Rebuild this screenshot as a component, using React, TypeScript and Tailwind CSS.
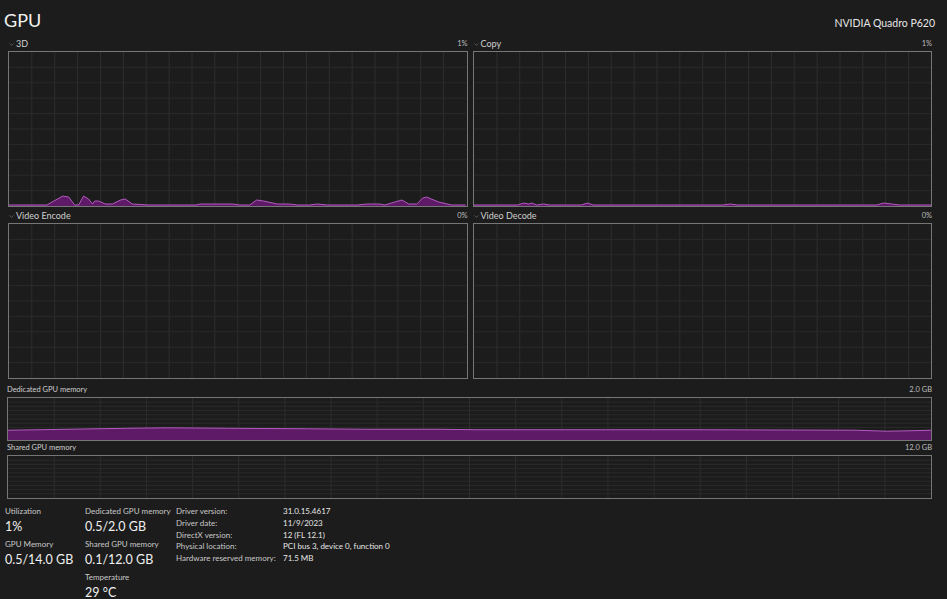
import { ChevronDown } from 'lucide-react'

// ─── Chart data ───────────────────────────────────────────────────────────────

// [x, y] in chart pixels (460 x 155), y measured from top
const pts3d: [number, number][] = [
  [0, 154], [38, 154], [54, 145], [60, 146], [66, 154], [70, 154], [75, 145], [80, 148], [84, 153],
  [86, 150], [90, 150], [97, 153], [104, 153], [112, 149], [117, 148], [124, 153], [140, 154],
  [188, 154], [192, 153], [225, 153], [232, 154], [242, 154], [249, 149], [256, 150], [270, 153],
  [282, 153], [290, 154], [302, 154], [310, 153], [320, 154], [350, 154], [360, 153], [372, 153],
  [378, 154], [388, 151], [395, 149], [402, 153], [410, 153], [416, 147], [420, 146], [432, 151],
  [445, 154], [459, 154],
]

const ptsCopy: [number, number][] = [
  [0, 154], [44, 154], [50, 152], [55, 153], [58, 152], [63, 154], [70, 153], [76, 154], [108, 154],
  [114, 152], [120, 154], [250, 154], [258, 153], [265, 154], [405, 154], [412, 152], [420, 153], [428, 154], [460, 154],
]

const ptsDedicated: [number, number][] = [
  [0, 33], [60, 32], [120, 31], [160, 30.5], [220, 31], [300, 31.5], [360, 32], [430, 32],
  [470, 32.5], [600, 32.5], [700, 32.5], [850, 33], [880, 34], [905, 33.5], [925, 33],
]

function areaPath(pts: [number, number][], h: number) {
  const line = pts.map(([x, y], i) => `${i === 0 ? 'M' : 'L'}${x} ${y}`).join(' ')
  const last = pts[pts.length - 1]
  return {
    line,
    area: `${line} L${last[0]} ${h} L${pts[0][0]} ${h} Z`,
  }
}

// ─── Components ───────────────────────────────────────────────────────────────

function Chart({
  w,
  h,
  cols,
  rows,
  pts,
  className,
}: {
  w: number
  h: number
  cols: number
  rows: number
  pts?: [number, number][]
  className?: string
}) {
  const path = pts ? areaPath(pts, h) : null
  return (
    <div className={`border border-[#767676] bg-[#1c1c1c] ${className ?? ''}`}>
      <svg width="100%" height="100%" viewBox={`0 0 ${w} ${h}`} preserveAspectRatio="none" className="block">
        {Array.from({ length: cols - 1 }, (_, i) => (
          <line
            key={`c${i}`}
            x1={((i + 1) * w) / cols}
            x2={((i + 1) * w) / cols}
            y1={0}
            y2={h}
            stroke="#2e2e2e"
            strokeWidth={1}
            vectorEffect="non-scaling-stroke"
          />
        ))}
        {Array.from({ length: rows - 1 }, (_, i) => (
          <line
            key={`r${i}`}
            y1={((i + 1) * h) / rows}
            y2={((i + 1) * h) / rows}
            x1={0}
            x2={w}
            stroke="#2a2a2a"
            strokeWidth={1}
            vectorEffect="non-scaling-stroke"
          />
        ))}
        {path && (
          <>
            <path d={path.area} fill="#5e1a66" />
            <path d={path.line} fill="none" stroke="#b35bbf" strokeWidth={1} vectorEffect="non-scaling-stroke" />
          </>
        )}
      </svg>
    </div>
  )
}

function Label({ name, value, chevron = true }: { name: string; value: string; chevron?: boolean }) {
  return (
    <div className="flex h-[14px] items-center justify-between text-[#cfcfcf]">
      <div className="flex items-center">
        {chevron && <ChevronDown size={7} strokeWidth={1.5} className="text-[#9a9a9a]" />}
        <span className={chevron ? 'ml-[1px] text-[9px]' : 'text-[7.5px]'}>{name}</span>
      </div>
      <span className="text-[7.5px] text-[#bdbdbd]">{value}</span>
    </div>
  )
}

function Stat({ label, value }: { label: string; value: string }) {
  return (
    <div className="flex flex-col whitespace-nowrap">
      <span className="text-[8px] leading-[13px] text-[#c8c8c8]">{label}</span>
      <span className="text-[12.5px] leading-[17px] text-[#f0f0f0]">{value}</span>
    </div>
  )
}

export default function App() {
  const details: [string, string][] = [
    ['Driver version:', '31.0.15.4617'],
    ['Driver date:', '11/9/2023'],
    ['DirectX version:', '12 (FL 12.1)'],
    ['Physical location:', 'PCI bus 3, device 0, function 0'],
    ['Hardware reserved memory:', '71.5 MB'],
  ]

  return (
    <div
      className="h-[599px] w-[947px] overflow-hidden bg-[#1c1c1c] text-white"
      style={{ fontFamily: '"Segoe UI", Lato, "Noto Sans", sans-serif' }}
    >
      {/* Header */}
      <div className="flex h-[37px] items-start justify-between pl-[4px] pr-[12px]">
        <h1 className="mt-[8px] text-[18px] leading-[24px] font-normal text-[#f2f2f2]">GPU</h1>
        <span className="mt-[16px] text-[10.5px] leading-[14px] text-[#e6e6e6]">NVIDIA Quadro P620</span>
      </div>

      {/* Engine charts */}
      <div className="grid grid-cols-2 gap-x-[5px] pl-[8px] pr-[15px]">
        <div>
          <Label name="3D" value="1%" />
          <Chart w={460} h={155} cols={20} rows={10} pts={pts3d} className="h-[156px]" />
        </div>
        <div>
          <Label name="Copy" value="1%" />
          <Chart w={460} h={155} cols={20} rows={10} pts={ptsCopy} className="h-[156px]" />
        </div>
        <div className="mt-[2px]">
          <Label name="Video Encode" value="0%" />
          <Chart w={460} h={155} cols={20} rows={10} className="h-[156px]" />
        </div>
        <div className="mt-[2px]">
          <Label name="Video Decode" value="0%" />
          <Chart w={460} h={155} cols={20} rows={10} className="h-[156px]" />
        </div>
      </div>

      {/* Memory charts */}
      <div className="mt-[4px] pl-[7px] pr-[15px]">
        <Label name="Dedicated GPU memory" value="2.0 GB" chevron={false} />
        <Chart w={925} h={43} cols={20} rows={10} pts={ptsDedicated} className="h-[44px]" />
        <Label name="Shared GPU memory" value="12.0 GB" chevron={false} />
        <Chart w={925} h={43} cols={20} rows={10} className="h-[44px]" />
      </div>

      {/* Stats */}
      <div className="mt-[6px] flex items-start pl-[5px]">
        <div className="flex w-[80px] flex-col gap-[3px]">
          <Stat label="Utilization" value="1%" />
          <Stat label="GPU Memory" value="0.5/14.0 GB" />
        </div>
        <div className="flex w-[91px] flex-col gap-[3px]">
          <Stat label="Dedicated GPU memory" value="0.5/2.0 GB" />
          <Stat label="Shared GPU memory" value="0.1/12.0 GB" />
          <Stat label="Temperature" value="29 °C" />
        </div>
        <div className="mt-[1px] grid grid-cols-[107px_auto] content-start whitespace-nowrap text-[8px] leading-[11.8px] text-[#c8c8c8]">
          {details.map(([k, v]) => (
            <div key={k} className="contents">
              <span>{k}</span>
              <span className="text-[#e6e6e6]">{v}</span>
            </div>
          ))}
        </div>
      </div>
    </div>
  )
}
